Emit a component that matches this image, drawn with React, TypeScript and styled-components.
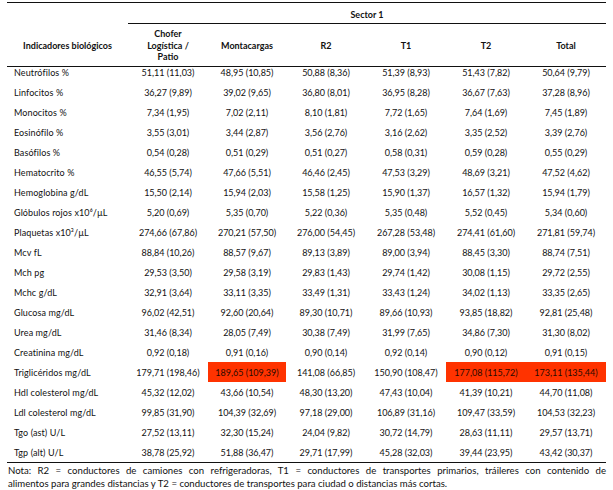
import React from "react";
import styled, { createGlobalStyle } from "styled-components";

const Global = createGlobalStyle`
  html, body { margin: 0; padding: 0; background: #ffffff; }
  body { font-family: Lato, "Open Sans", sans-serif; color: #111111; }
`;

const COLS = "121px 80px 78px 80px 80px 80px 80px";

const Page = styled.div`
  padding: 2px 7px 0 7px;
  width: 599px;
`;

const Table = styled.div`
  width: 599px;
  border-top: 1px solid #111;
  border-bottom: 1px solid #111;
`;

const HeadTop = styled.div`
  display: grid;
  grid-template-columns: 121px 478px;
  height: 21px;
`;

const SectorCell = styled.div`
  border-bottom: 1px solid #111;
  display: flex;
  align-items: center;
  justify-content: center;
  padding-top: 3px;
  box-sizing: border-box;
  font-weight: 700;
  font-size: 9px;
`;

const HeadRow = styled.div`
  display: grid;
  grid-template-columns: ${COLS};
  height: 43px;
  border-bottom: 1px solid #111;
  box-sizing: border-box;
`;

const HeadCell = styled.div`
  display: flex;
  align-items: center;
  justify-content: center;
  text-align: center;
  font-weight: 700;
  font-size: 9px;
  line-height: 11.5px;
  padding-top: 1px;
`;

const Row = styled.div<{ $first?: boolean }>`
  display: grid;
  grid-template-columns: ${COLS};
  height: ${(p) => (p.$first ? "15px" : "20px")};
  align-items: stretch;
  font-size: 9px;
`;

const Label = styled.div<{ $first?: boolean }>`
  display: flex;
  align-items: center;
  padding-left: 7px;
  margin-top: ${(p) => (p.$first ? "-5px" : "0")};
  white-space: nowrap;
  letter-spacing: 0.1px;
`;

const Cell = styled.div<{ $hl?: boolean; $first?: boolean }>`
  display: flex;
  align-items: center;
  justify-content: center;
  white-space: nowrap;
  margin-top: ${(p) => (p.$first ? "-5px" : "0")};
  background: ${(p) => (p.$hl ? "#ff3300" : "transparent")};
  color: ${(p) => (p.$hl ? "#2a0a00" : "#111111")};
`;

const Note = styled.div`
  width: 599px;
  font-size: 9.6px;
  line-height: 13px;
  padding-top: 1px;
`;

const NoteLine = styled.div<{ $justify?: boolean }>`
  text-align: ${(p) => (p.$justify ? "justify" : "left")};
  text-align-last: ${(p) => (p.$justify ? "justify" : "left")};
  white-space: nowrap;
  padding-left: 1px;
`;

type R = { label: string; v: string[]; hl?: number[] };

const rows: R[] = [
  { label: "Neutrófilos %", v: ["51,11 (11,03)", "48,95 (10,85)", "50,88 (8,36)", "51,39 (8,93)", "51,43 (7,82)", "50,64 (9,79)"] },
  { label: "Linfocitos %", v: ["36,27 (9,89)", "39,02 (9,65)", "36,80 (8,01)", "36,95 (8,28)", "36,67 (7,63)", "37,28 (8,96)"] },
  { label: "Monocitos %", v: ["7,34 (1,95)", "7,02 (2,11)", "8,10 (1,81)", "7,72 (1,65)", "7,64 (1,69)", "7,45 (1,89)"] },
  { label: "Eosinófilo %", v: ["3,55 (3,01)", "3,44 (2,87)", "3,56 (2,76)", "3,16 (2,62)", "3,35 (2,52)", "3,39 (2,76)"] },
  { label: "Basófilos %", v: ["0,54 (0,28)", "0,51 (0,29)", "0,51 (0,27)", "0,58 (0,31)", "0,59 (0,28)", "0,55 (0,29)"] },
  { label: "Hematocrito %", v: ["46,55 (5,74)", "47,66 (5,51)", "46,46 (2,45)", "47,53 (3,29)", "48,69 (3,21)", "47,52 (4,62)"] },
  { label: "Hemoglobina g/dL", v: ["15,50 (2,14)", "15,94 (2,03)", "15,58 (1,25)", "15,90 (1,37)", "16,57 (1,32)", "15,94 (1,79)"] },
  { label: "Glóbulos rojos x10⁶/µL", v: ["5,20 (0,69)", "5,35 (0,70)", "5,22 (0,36)", "5,35 (0,48)", "5,52 (0,45)", "5,34 (0,60)"] },
  { label: "Plaquetas x10³/µL", v: ["274,66 (67,86)", "270,21 (57,50)", "276,00 (54,45)", "267,28 (53,48)", "274,41 (61,60)", "271,81 (59,74)"] },
  { label: "Mcv fL", v: ["88,84 (10,26)", "88,57 (9,67)", "89,13 (3,89)", "89,00 (3,94)", "88,45 (3,30)", "88,74 (7,51)"] },
  { label: "Mch pg", v: ["29,53 (3,50)", "29,58 (3,19)", "29,83 (1,43)", "29,74 (1,42)", "30,08 (1,15)", "29,72 (2,55)"] },
  { label: "Mchc g/dL", v: ["32,91 (3,64)", "33,11 (3,35)", "33,49 (1,31)", "33,43 (1,24)", "34,02 (1,13)", "33,35 (2,65)"] },
  { label: "Glucosa mg/dL", v: ["96,02 (42,51)", "92,60 (20,64)", "89,30 (10,71)", "89,66 (10,93)", "93,85 (18,82)", "92,81 (25,48)"] },
  { label: "Urea mg/dL", v: ["31,46 (8,34)", "28,05 (7,49)", "30,38 (7,49)", "31,99 (7,65)", "34,86 (7,30)", "31,30 (8,02)"] },
  { label: "Creatinina mg/dL", v: ["0,92 (0,18)", "0,91 (0,16)", "0,90 (0,14)", "0,92 (0,14)", "0,90 (0,12)", "0,91 (0,15)"] },
  { label: "Triglicéridos mg/dL", v: ["179,71 (198,46)", "189,65 (109,39)", "141,08 (66,85)", "150,90 (108,47)", "177,08 (115,72)", "173,11 (135,44)"], hl: [1, 4, 5] },
  { label: "Hdl colesterol mg/dL", v: ["45,32 (12,02)", "43,66 (10,54)", "48,30 (13,20)", "47,43 (10,04)", "41,39 (10,21)", "44,70 (11,08)"] },
  { label: "Ldl colesterol mg/dL", v: ["99,85 (31,90)", "104,39 (32,69)", "97,18 (29,00)", "106,89 (31,16)", "109,47 (33,59)", "104,53 (32,23)"] },
  { label: "Tgo (ast) U/L", v: ["27,52 (13,11)", "32,30 (15,24)", "24,04 (9,82)", "30,72 (14,79)", "28,63 (11,11)", "29,57 (13,71)"] },
  { label: "Tgp (alt) U/L", v: ["38,78 (25,92)", "51,88 (36,47)", "29,71 (17,99)", "45,28 (32,03)", "39,44 (23,95)", "43,42 (30,37)"] },
];

export default function App() {
  return (
    <Page>
      <Global />
      <Table>
        <HeadTop>
          <div />
          <SectorCell>Sector 1</SectorCell>
        </HeadTop>
        <HeadRow>
          <HeadCell>Indicadores biológicos</HeadCell>
          <HeadCell>
            Chofer
            <br />
            Logística /
            <br />
            Patio
          </HeadCell>
          <HeadCell>Montacargas</HeadCell>
          <HeadCell>R2</HeadCell>
          <HeadCell>T1</HeadCell>
          <HeadCell>T2</HeadCell>
          <HeadCell>Total</HeadCell>
        </HeadRow>
        {rows.map((r, i) => (
          <Row key={r.label} $first={i === 0}>
            <Label $first={i === 0}>{r.label}</Label>
            {r.v.map((val, j) => (
              <Cell key={j} $first={i === 0} $hl={r.hl?.includes(j)}>
                {val}
              </Cell>
            ))}
          </Row>
        ))}
      </Table>
      <Note>
        <NoteLine $justify>
          Nota: R2 = conductores de camiones con refrigeradoras, T1 = conductores de transportes primarios, tráileres con contenido de
        </NoteLine>
        <NoteLine>
          alimentos para grandes distancias y T2 = conductores de transportes para ciudad o distancias más cortas.
        </NoteLine>
      </Note>
    </Page>
  );
}
